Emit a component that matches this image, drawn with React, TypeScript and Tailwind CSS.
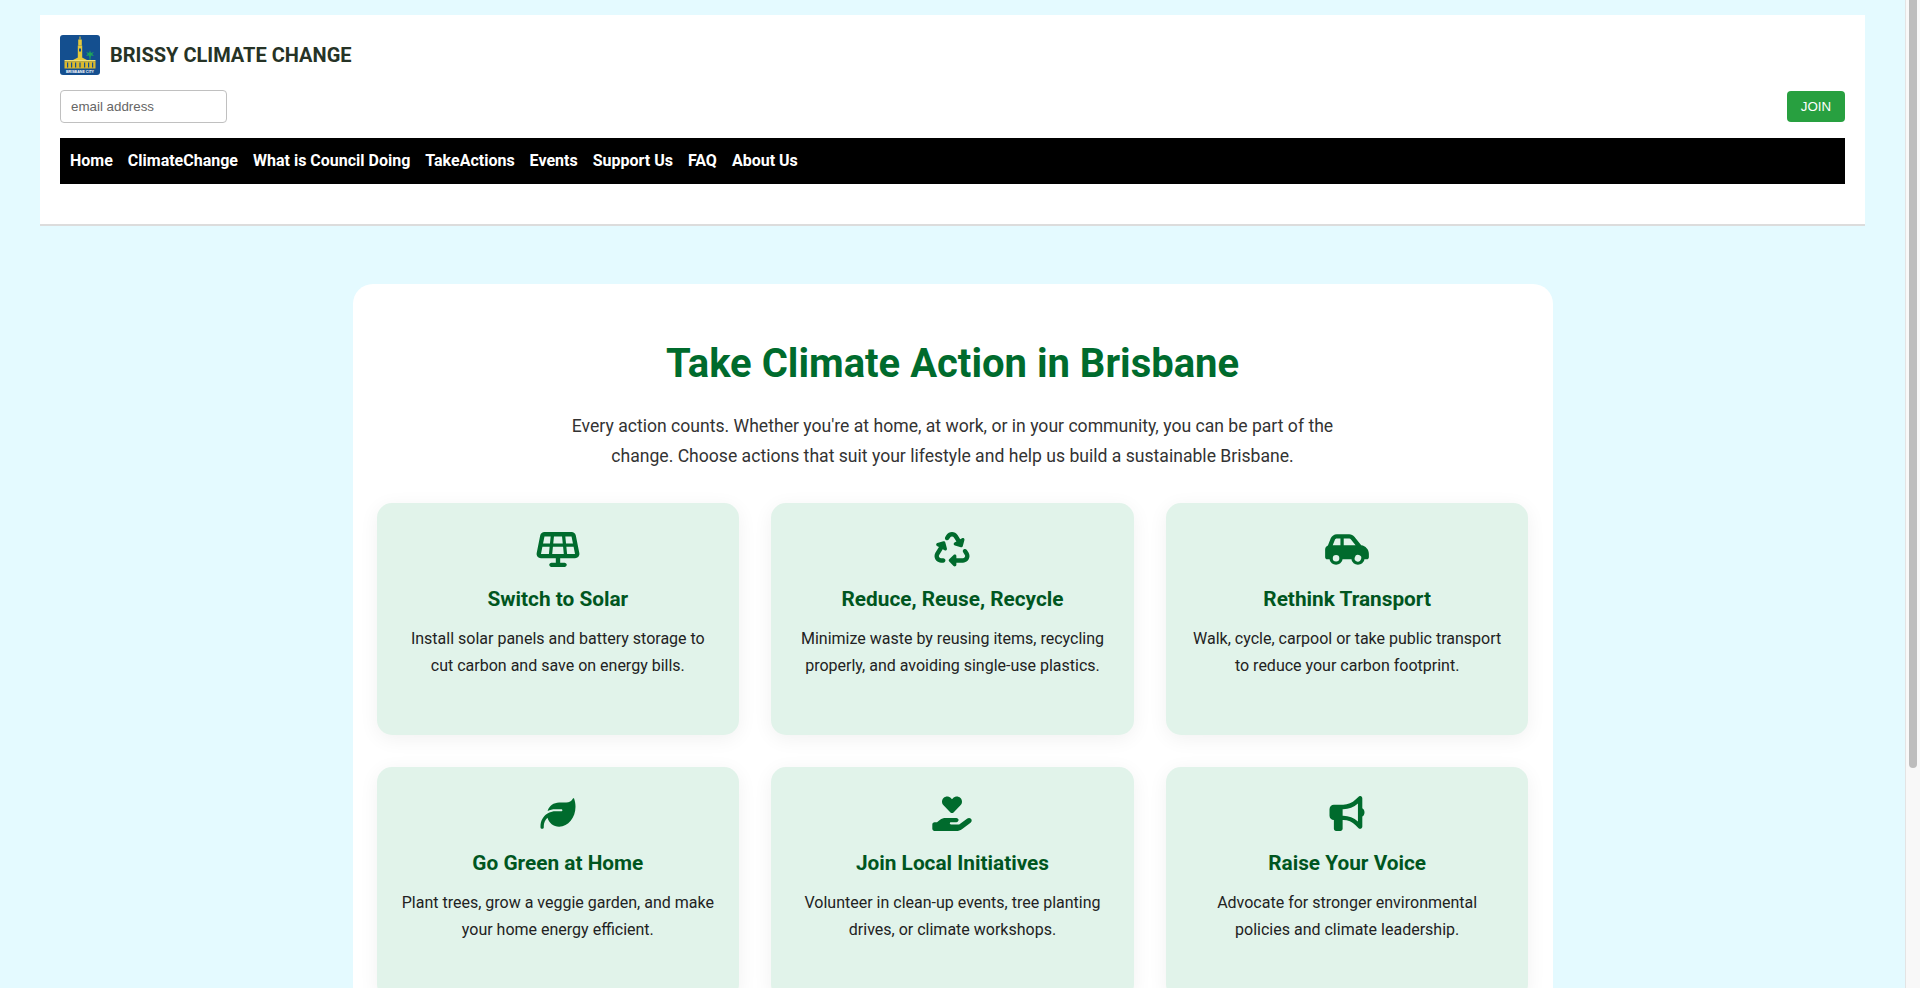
import { FaSolarPanel, FaRecycle, FaCarSide, FaLeaf, FaHandHoldingHeart, FaBullhorn } from "react-icons/fa6";

const cards = [
  { Icon: FaSolarPanel, title: "Switch to Solar", text: ["Install solar panels and battery storage to", "cut carbon and save on energy bills."] },
  { Icon: FaRecycle, title: "Reduce, Reuse, Recycle", text: ["Minimize waste by reusing items, recycling", "properly, and avoiding single-use plastics."] },
  { Icon: FaCarSide, title: "Rethink Transport", text: ["Walk, cycle, carpool or take public transport", "to reduce your carbon footprint."] },
  { Icon: FaLeaf, title: "Go Green at Home", text: ["Plant trees, grow a veggie garden, and make", "your home energy efficient."] },
  { Icon: FaHandHoldingHeart, title: "Join Local Initiatives", text: ["Volunteer in clean-up events, tree planting", "drives, or climate workshops."] },
  { Icon: FaBullhorn, title: "Raise Your Voice", text: ["Advocate for stronger environmental", "policies and climate leadership."] },
];

const nav = ["Home", "ClimateChange", "What is Council Doing", "TakeActions", "Events", "Support Us", "FAQ", "About Us"];

function Logo() {
  return (
    <svg viewBox="0 0 40 40" className="w-10 h-10 shrink-0 rounded-[3px]">
      <rect width="40" height="40" fill="#144f8f" />
      <rect x="19.5" y="1.5" width="1" height="3" fill="#e6c83a" />
      <rect x="18.2" y="4.5" width="3.6" height="6" fill="#e6c83a" />
      <rect x="17.8" y="10.5" width="4.4" height="13" fill="#e6c83a" />
      <rect x="19" y="13.5" width="2" height="3" fill="#144f8f" />
      <rect x="29.5" y="21" width="1" height="5" fill="#1fa35c" />
      <path d="M30 15.5 L31 18 L34 17 L32.2 19 L34 21 L31 20.5 L30 23 L29 20.5 L26 21 L27.8 19 L26 17 L29 18 Z" fill="#1fa35c" />
      <path d="M13 25 L20 21.5 L27 25 Z" fill="#e6c83a" />
      <rect x="4.5" y="25" width="31" height="1.2" fill="#efe07a" />
      <rect x="4.5" y="26.2" width="31" height="7.3" fill="#d9b92e" />
      <rect x="7" y="27.5" width="1.2" height="5" fill="#144f8f" />
      <rect x="11" y="27.5" width="1.2" height="5" fill="#144f8f" />
      <rect x="15" y="27.5" width="1.2" height="5" fill="#144f8f" />
      <rect x="19.4" y="27.5" width="1.2" height="5" fill="#144f8f" />
      <rect x="24" y="27.5" width="1.2" height="5" fill="#144f8f" />
      <rect x="28" y="27.5" width="1.2" height="5" fill="#144f8f" />
      <rect x="32" y="27.5" width="1.2" height="5" fill="#144f8f" />
      <text x="20" y="37.5" textAnchor="middle" fontSize="3.6" fontWeight="700" fill="#ffffff" fontFamily="'Liberation Sans', sans-serif">BRISBANE CITY</text>
    </svg>
  );
}

export default function App() {
  return (
    <div className="h-screen overflow-hidden flex bg-[#e4faff] font-['Roboto',sans-serif]">
      <div className="flex-1 min-w-0 h-[988px] overflow-hidden">
        <header className="mx-10 mt-[15px] h-[211px] bg-white px-5 pt-5 border-b-2 border-[#dcdcdc]">
          <div className="flex items-center gap-[10px] h-10">
            <Logo />
            <h1 className="text-[20px] font-bold text-[#263326]">BRISSY CLIMATE CHANGE</h1>
          </div>
          <div className="flex items-center justify-between mt-[15px] h-[33px]">
            <input
              placeholder="email address"
              className="w-[167px] h-[33px] border border-[#c0c0c0] rounded-[4px] px-[10px] text-[13.333px] bg-white placeholder:text-[#666] outline-none font-['Liberation_Sans',sans-serif]"
            />
            <button className="w-[58px] h-[31px] bg-[#28a040] text-white text-[13.333px] rounded-[4px] font-['Liberation_Sans',sans-serif]">JOIN</button>
          </div>
          <nav className="flex items-center gap-[15px] bg-black h-[46px] mt-[15px] px-[10px]">
            {nav.map((n) => (
              <a key={n} className="text-white text-[16px] font-bold whitespace-nowrap">{n}</a>
            ))}
          </nav>
        </header>
        <main className="mx-auto mt-[58px] w-[1200px] bg-white rounded-[20px] px-6 pt-[50px] pb-10">
          <h2 className="text-center text-[40px] leading-[60px] font-bold text-[#006b2d]">Take Climate Action in Brisbane</h2>
          <p className="mt-[17px] text-center text-[17.6px] leading-[30px] text-[#333]">
            Every action counts. Whether you're at home, at work, or in your community, you can be part of the
            <br />
            change. Choose actions that suit your lifestyle and help us build a sustainable Brisbane.
          </p>
          <div className="grid grid-cols-3 gap-8 mt-[32px]">
            {cards.map(({ Icon, title, text }) => (
              <div key={title} className="h-[232px] bg-[#e1f3ea] rounded-[15px] shadow-[0_4px_20px_rgba(0,0,0,0.06)] pt-[29px] text-center">
                <Icon className="mx-auto w-11 h-[35px] text-[#006b2d]" />
                <h3 className="mt-[16px] text-[20.8px] leading-[32px] font-bold text-[#00561f]">{title}</h3>
                <p className="mt-[10px] text-[16px] leading-[27px] text-[#222]">
                  {text[0]}
                  <br />
                  {text[1]}
                </p>
              </div>
            ))}
          </div>
        </main>
      </div>
      <div className="w-[15px] h-[988px] shrink-0 bg-[#f8f8f8] border-l border-[#e4e4e4] flex justify-center">
        <div className="w-2 h-[768px] bg-[#bdbdbd] rounded-b-full" />
      </div>
    </div>
  );
}
